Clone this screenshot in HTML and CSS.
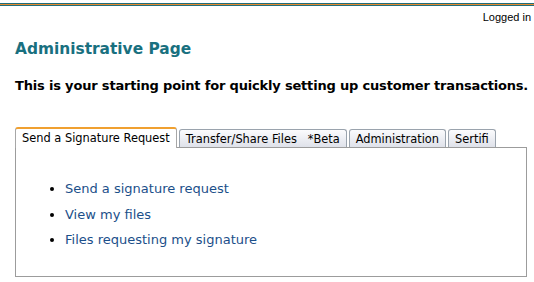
FILE: index.html
```html
<!DOCTYPE html>
<html>
<head>
<meta charset="utf-8">
<link rel="stylesheet" href="styles.css">
</head>
<body>
<div class="topbar"></div>
<div class="status">Logged in</div>
<div class="main">
  <h1 class="title">Administrative Page</h1>
  <p class="intro">This is your starting point for quickly setting up customer transactions.</p>
  <div class="tabs">
    <div class="tab active">Send a Signature Request</div>
    <div class="tab">Transfer/Share Files&nbsp;&nbsp; *Beta</div>
    <div class="tab">Administration</div>
    <div class="tab">Sertifi</div>
  </div>
  <div class="panel">
    <ul class="links">
      <li><a href="#">Send a signature request</a></li>
      <li><a href="#">View my files</a></li>
      <li><a href="#">Files requesting my signature</a></li>
    </ul>
  </div>
</div>
</body>
</html>
```
FILE: styles.css
```css
html, body { margin: 0; padding: 0; background: #fff; }
body { font-family: "DejaVu Sans", Verdana, sans-serif; color: #000; }
.topbar {
  margin-top: 3px;
  border-top: 1px solid #1f6e7c;
  border-bottom: 1px solid #1f6e7c;
  background: #e8892c;
  height: 1px;
}
.status {
  text-align: right;
  font-family: "Liberation Sans", Arial, sans-serif;
  font-size: 11px;
  padding: 5px 3px 0 0;
  height: 14px;
}
.main { padding: 0 7px 0 15px; }
.title {
  margin: 14px 0 0;
  font-size: 15.4px;
  font-weight: bold;
  color: #19707f;
  line-height: 20px;
}
.intro {
  margin: 18px 0 0;
  font-size: 13px;
  letter-spacing: -0.18px;
  font-weight: bold;
  line-height: 18px;
  white-space: nowrap;
}
.tabs {
  display: flex;
  gap: 2px;
  margin-top: 32px;
  align-items: flex-end;
}
.tab {
  font-size: 11.4px;
  line-height: 15px;
  padding: 2px 6px 0;
  border: 1px solid #9aa3ad;
  border-bottom: none;
  border-radius: 3px 3px 0 0;
  background: linear-gradient(#fbfbfd, #dfe2ea);
  color: #000;
}
.tab.active {
  background: #fff;
  border: 1px solid #a7a7a7;
  border-top: 2px solid #f0a030;
  border-bottom: none;
  padding: 2px 6px 2px;
  position: relative;
  margin-bottom: -1px;
}
.panel {
  border: 1px solid #9c9c9c;
  height: 130px;
  box-sizing: border-box;
}
.links {
  margin: 28px 0 0;
  padding-left: 49px;
  font-size: 13px;
  line-height: 25.5px;
}
.links a { color: #1b4f8a; text-decoration: none; }
```
